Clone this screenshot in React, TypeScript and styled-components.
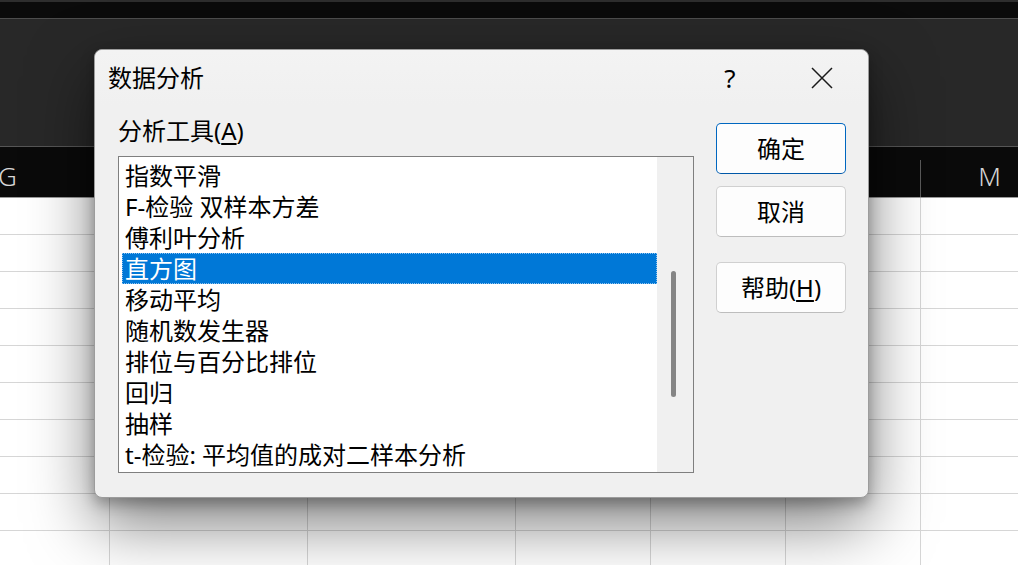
import React from "react";
import styled, { createGlobalStyle } from "styled-components";

const GlobalStyle = createGlobalStyle`
  html, body { margin: 0; padding: 0; background: #ffffff; }
  body { font-family: "Noto Sans", "Noto Sans CJK SC", sans-serif; overflow: hidden; }
  #root { width: 1018px; height: 565px; }
  * { box-sizing: border-box; }
`;

const Screen = styled.div`
  position: relative;
  width: 1018px;
  height: 565px;
  overflow: hidden;
  display: flex;
  flex-direction: column;
  background: #ffffff;
`;

const TopEdge = styled.div`
  flex: none;
  height: 2px;
  background: #2e2e2e;
`;

const TitleStrip = styled.div`
  flex: none;
  height: 17px;
  background: #0b0b0b;
  border-bottom: 1px solid #4d4d4d;
`;

const Ribbon = styled.div`
  flex: none;
  height: 128px;
  background: #282828;
  border-bottom: 1px solid #565656;
`;

const COLS = "205px 198px 208px 135px 135px 135px 137px";

const HeaderRow = styled.div`
  flex: none;
  height: 51px;
  margin-left: -95px;
  display: grid;
  grid-template-columns: ${COLS};
  background: #0a0a0a;
  border-bottom: 1px solid #9a9a9a;
`;

const HeaderCell = styled.div`
  position: relative;
  display: flex;
  align-items: center;
  justify-content: center;
  padding-top: 8px;
  color: #d6d6d6;
  font-family: "Noto Sans", sans-serif;
  font-size: 26px;
  font-weight: 300;
  &::after {
    content: "";
    position: absolute;
    right: 0;
    top: 13px;
    bottom: 0;
    width: 1px;
    background: #5a5a5a;
  }
`;

const Sheet = styled.div`
  flex: 1;
  overflow: hidden;
  margin-left: -95px;
`;

const SheetRow = styled.div`
  display: grid;
  grid-template-columns: ${COLS};
  height: 37px;
  border-bottom: 1px solid #d6d6d6;
`;

const SheetCell = styled.div`
  border-right: 1px solid #d6d6d6;
`;

const Dialog = styled.div`
  position: absolute;
  left: 94px;
  top: 49px;
  width: 775px;
  height: 449px;
  border: 1px solid #9c9c9c;
  border-radius: 8px;
  background: #f0f0f0;
  box-shadow: 0 6px 14px rgba(0, 0, 0, 0.28), 0 26px 64px rgba(0, 0, 0, 0.5);
  display: flex;
  flex-direction: column;
  color: #000000;
  font-family: "Noto Sans", "Noto Sans CJK SC", sans-serif;
`;

const TitleBar = styled.div`
  flex: none;
  height: 55px;
  display: flex;
  align-items: center;
  padding-left: 13px;
  border-radius: 8px 8px 0 0;
  background: linear-gradient(#f3f3f3, #f0f0f0);
`;

const Title = styled.div`
  flex: 1;
  font-size: 24px;
  line-height: 1;
`;

const CaptionButton = styled.div`
  width: 92px;
  height: 55px;
  display: flex;
  align-items: center;
  justify-content: center;
  font-size: 26px;
  line-height: 1;
`;

const Body = styled.div`
  flex: 1;
  display: flex;
  gap: 22px;
  padding: 11px 0 0 23px;
`;

const LeftColumn = styled.div`
  width: 576px;
  display: flex;
  flex-direction: column;
`;

const FieldLabel = styled.div`
  height: 30px;
  line-height: 30px;
  font-size: 24px;
  margin-bottom: 10px;
`;

const Mnemonic = styled.span`
  text-decoration: underline;
  text-decoration-thickness: 1.5px;
  text-underline-offset: 3px;
`;

const ListBox = styled.div`
  width: 576px;
  height: 317px;
  border: 1px solid #7f7f7f;
  display: flex;
  background: #ffffff;
`;

const Items = styled.div`
  flex: 1;
  padding: 3px 0 0 3px;
  overflow: hidden;
`;

const Item = styled.div<{ $selected?: boolean }>`
  height: 31px;
  line-height: 31px;
  padding-left: 3px;
  font-size: 24px;
  white-space: nowrap;
  color: ${(p) => (p.$selected ? "#ffffff" : "#000000")};
  background: ${(p) => (p.$selected ? "#0078d7" : "transparent")};
  outline: ${(p) => (p.$selected ? "1px dotted #8fc3ef" : "none")};
  outline-offset: -1px;
`;

const ScrollTrack = styled.div`
  width: 36px;
  background: #f0f0f0;
  padding-left: 14px;
`;

const Thumb = styled.div<{ $top: number; $height: number }>`
  width: 5px;
  margin-top: ${(p) => p.$top}px;
  height: ${(p) => p.$height}px;
  border-radius: 3px;
  background: #858585;
`;

const ButtonColumn = styled.div`
  width: 130px;
  padding-top: 7px;
  display: flex;
  flex-direction: column;
`;

const DialogButton = styled.div<{ $primary?: boolean; $gap: number }>`
  height: 51px;
  margin-top: ${(p) => p.$gap}px;
  border-radius: 5px;
  border: 1px solid ${(p) => (p.$primary ? "#0067c0" : "#d0d0d0")};
  border-bottom-color: ${(p) => (p.$primary ? "#0058a8" : "#bdbdbd")};
  background: #fdfdfd;
  display: flex;
  align-items: center;
  justify-content: center;
  font-size: 24px;
  line-height: 1;
  color: #000000;
`;

const tools = [
  "指数平滑",
  "F-检验 双样本方差",
  "傅利叶分析",
  "直方图",
  "移动平均",
  "随机数发生器",
  "排位与百分比排位",
  "回归",
  "抽样",
  "t-检验: 平均值的成对二样本分析",
];

const columns = ["G", "H", "I", "J", "K", "L", "M"];

export default function App() {
  return (
    <>
      <GlobalStyle />
      <Screen>
        <TopEdge />
        <TitleStrip />
        <Ribbon />
        <HeaderRow>
          {columns.map((c) => (
            <HeaderCell key={c}>{c}</HeaderCell>
          ))}
        </HeaderRow>
        <Sheet>
          {Array.from({ length: 10 }).map((_, r) => (
            <SheetRow key={r}>
              {columns.map((c) => (
                <SheetCell key={c} />
              ))}
            </SheetRow>
          ))}
        </Sheet>

        <Dialog>
          <TitleBar>
            <Title>数据分析</Title>
            <CaptionButton>?</CaptionButton>
            <CaptionButton>
              <svg width="22" height="22" viewBox="0 0 22 22">
                <path d="M1 1 L21 21 M21 1 L1 21" stroke="#1a1a1a" strokeWidth="1.5" fill="none" />
              </svg>
            </CaptionButton>
          </TitleBar>
          <Body>
            <LeftColumn>
              <FieldLabel>
                分析工具(<Mnemonic>A</Mnemonic>)
              </FieldLabel>
              <ListBox>
                <Items>
                  {tools.map((t) => (
                    <Item key={t} $selected={t === "直方图"}>
                      {t}
                    </Item>
                  ))}
                </Items>
                <ScrollTrack>
                  <Thumb $top={114} $height={126} />
                </ScrollTrack>
              </ListBox>
            </LeftColumn>
            <ButtonColumn>
              <DialogButton $primary $gap={0}>确定</DialogButton>
              <DialogButton $gap={12}>取消</DialogButton>
              <DialogButton $gap={25}>
                帮助(<Mnemonic>H</Mnemonic>)
              </DialogButton>
            </ButtonColumn>
          </Body>
        </Dialog>
      </Screen>
    </>
  );
}
